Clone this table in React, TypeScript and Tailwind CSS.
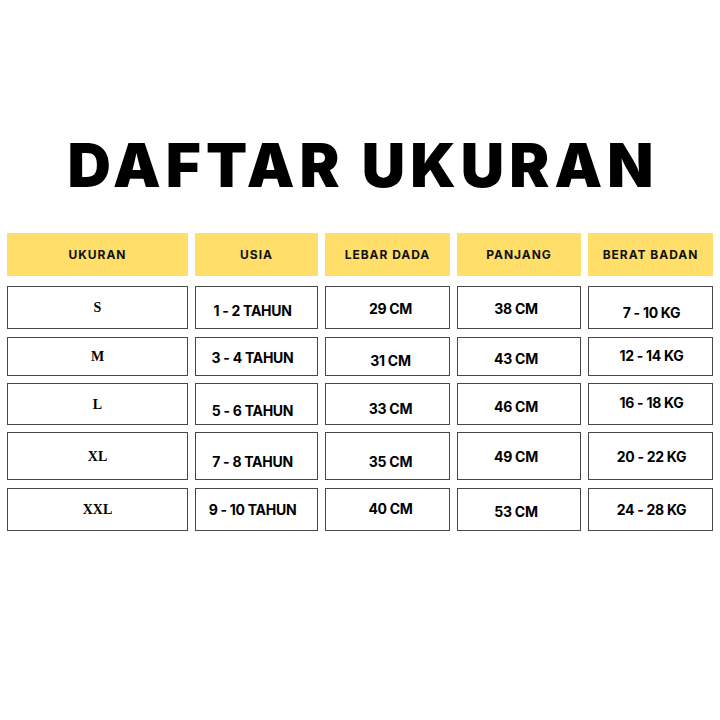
const rows = [
  {
    h: "h-[43px]",
    mt: "mt-[10px]",
    cells: [
      { t: "S", o: "" },
      { t: "1 - 2 TAHUN", o: "mt-[6px]" },
      { t: "29 CM", o: "mt-[2px]" },
      { t: "38 CM", o: "mt-[2px]" },
      { t: "7 - 10 KG", o: "mt-[10px]" },
    ],
  },
  {
    h: "h-[39px]",
    mt: "mt-[8px]",
    cells: [
      { t: "M", o: "" },
      { t: "3 - 4 TAHUN", o: "mt-[2px]" },
      { t: "31 CM", o: "mt-[8px]" },
      { t: "43 CM", o: "mt-[4px]" },
      { t: "12 - 14 KG", o: "-mt-[2px]" },
    ],
  },
  {
    h: "h-[42px]",
    mt: "mt-[7px]",
    cells: [
      { t: "L", o: "mt-[2px]" },
      { t: "5 - 6 TAHUN", o: "mt-[14px]" },
      { t: "33 CM", o: "mt-[10px]" },
      { t: "46 CM", o: "mt-[6px]" },
      { t: "16 - 18 KG", o: "-mt-[2px]" },
    ],
  },
  {
    h: "h-[48px]",
    mt: "mt-[7px]",
    cells: [
      { t: "XL", o: "mt-[2px]" },
      { t: "7 - 8 TAHUN", o: "mt-[12px]" },
      { t: "35 CM", o: "mt-[12px]" },
      { t: "49 CM", o: "mt-[2px]" },
      { t: "20 - 22 KG", o: "mt-[2px]" },
    ],
  },
  {
    h: "h-[43px]",
    mt: "mt-[8px]",
    cells: [
      { t: "XXL", o: "" },
      { t: "9 - 10 TAHUN", o: "" },
      { t: "40 CM", o: "-mt-[2px]" },
      { t: "53 CM", o: "mt-[4px]" },
      { t: "24 - 28 KG", o: "" },
    ],
  },
]

const headers = ["UKURAN", "USIA", "LEBAR DADA", "PANJANG", "BERAT BADAN"]

// nudge per column, the source image isn't centred exactly
const colShift = [
  "font-['Liberation_Serif',serif]",
  "-ml-[8px]",
  "ml-[6px]",
  "-ml-[6px]",
  "ml-[2px]",
]

const cols = "grid grid-cols-[181px_123px_125px_124px_125px] gap-x-[7px]"

export default function App() {
  return (
    <div className="w-[720px] h-[720px] bg-white px-[7px] font-['Inter','Liberation_Sans',sans-serif] text-black">
      <h1 className="pt-[135px] pl-[6px] text-center text-[60px] leading-none font-black tracking-[0.085em] whitespace-nowrap">
        DAFTAR UKURAN
      </h1>
      <div className={`${cols} h-[43px] mt-[38px]`}>
        {headers.map((h) => (
          <div key={h} className="bg-[#ffde6a] flex items-center justify-center text-[12px] font-bold tracking-[0.08em] text-[#111]">
            {h}
          </div>
        ))}
      </div>
      {rows.map((r, i) => (
        <div key={i} className={`${cols} ${r.h} ${r.mt}`}>
          {r.cells.map((c, j) => (
            <div key={j} className="border border-[#484848] flex items-center justify-center">
              <span
                className={`${c.o} ${colShift[j]} text-[14px] font-bold leading-none ${j === 0 ? "" : "tracking-[-0.02em]"}`}
              >
                {c.t}
              </span>
            </div>
          ))}
        </div>
      ))}
    </div>
  )
}
